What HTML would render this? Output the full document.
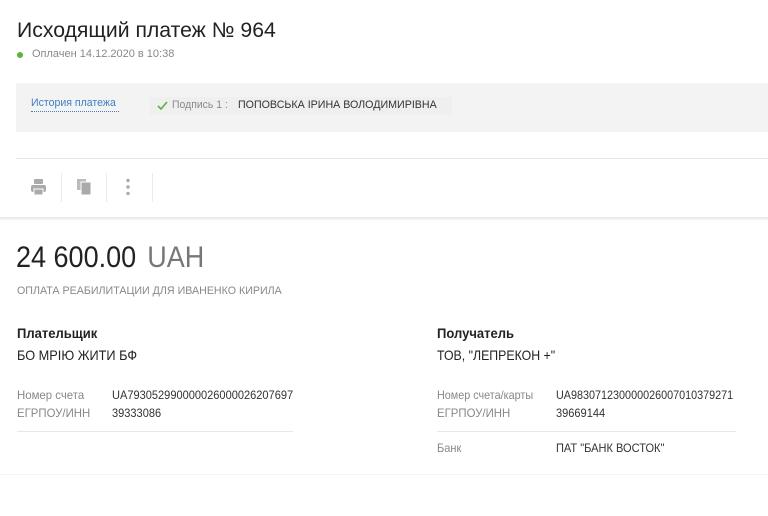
<!DOCTYPE html>
<html><head><meta charset="utf-8"><style>
*{margin:0;padding:0;box-sizing:border-box}
body{width:768px;height:516px;background:#fff;font-family:"Liberation Sans",sans-serif;color:#222;position:relative;overflow:hidden}
.a{position:absolute;white-space:nowrap}
.c{display:inline-block;transform-origin:0 0}
</style></head><body>
<div class="a" style="left:17px;top:19px;font-size:21px;color:#222"><span class="c" style="transform:scaleX(1.01)">Исходящий платеж № 964</span></div>
<div class="a" style="left:17px;top:52px;width:6px;height:6px;border-radius:50%;background:#5ab43c"></div>
<div class="a" style="left:32px;top:48px;font-size:11px;color:#888"><span class="c" style="transform:scaleX(1.0)">Оплачен 14.12.2020 в 10:38</span></div>

<div class="a" style="left:16px;top:83px;width:752px;height:49px;background:#f3f3f3"></div>
<div class="a" style="left:150px;top:97px;width:302px;height:18px;background:#efefef"></div>
<div class="a" style="left:31px;top:97px;font-size:11px;color:#3d80c4;border-bottom:1px dotted #3d80c4;padding-bottom:2px"><span class="c" style="transform:scaleX(0.96)">История платежа</span></div>
<svg class="a" style="left:157px;top:101px" width="11" height="9" viewBox="0 0 11 9"><path d="M1 5 L4 8 L10 1" fill="none" stroke="#5ab43c" stroke-width="1.6"/></svg>
<div class="a" style="left:172px;top:99px;font-size:11px;color:#888"><span class="c" style="transform:scaleX(0.95)">Подпись 1 :</span></div>
<div class="a" style="left:238px;top:99px;font-size:11px;color:#333"><span class="c" style="transform:scaleX(0.97)">ПОПОВСЬКА ІРИНА ВОЛОДИМИРІВНА</span></div>

<div class="a" style="left:16px;top:158px;width:752px;height:1px;background:#e6e6e6"></div>
<svg class="a" style="left:30px;top:178px" width="17" height="18" viewBox="0 0 17 18"><rect x="4" y="1" width="9" height="5" rx="1" fill="#aaa"/><rect x="1" y="7" width="15" height="7" rx="2" fill="#aaa"/><rect x="4" y="11" width="9" height="6" fill="#aaa" stroke="#fff" stroke-width="1"/></svg>
<svg class="a" style="left:76px;top:178px" width="17" height="18" viewBox="0 0 17 18"><rect x="1" y="1" width="9" height="11" fill="#bbb"/><rect x="5" y="4" width="10" height="13" fill="#aaa" stroke="#fff" stroke-width="1"/></svg>
<svg class="a" style="left:125px;top:178px" width="6" height="18" viewBox="0 0 6 18"><circle cx="3" cy="2.5" r="1.7" fill="#aaa"/><circle cx="3" cy="9" r="1.7" fill="#aaa"/><circle cx="3" cy="15.5" r="1.7" fill="#aaa"/></svg>
<div class="a" style="left:61px;top:173px;width:1px;height:29px;background:#ebebeb"></div>
<div class="a" style="left:106px;top:173px;width:1px;height:29px;background:#ebebeb"></div>
<div class="a" style="left:152px;top:173px;width:1px;height:29px;background:#ebebeb"></div>
<div class="a" style="left:0;top:217px;width:768px;height:3px;background:linear-gradient(#e4e4e4,#f7f7f7)"></div>

<div class="a" style="left:16px;top:241px;font-size:30px;color:#222"><span class="c" style="transform:scaleX(0.9)">24 600.00 <span style="color:#777;margin-left:4px">UAH</span></span></div>
<div class="a" style="left:17px;top:285px;font-size:11px;color:#888"><span class="c" style="transform:scaleX(0.97)">ОПЛАТА РЕАБИЛИТАЦИИ ДЛЯ ИВАНЕНКО КИРИЛА</span></div>

<div class="a" style="left:17px;top:325px;font-size:14px;color:#222;font-weight:bold"><span class="c" style="transform:scaleX(0.93)">Плательщик</span></div>
<div class="a" style="left:17px;top:347px;font-size:14px;color:#222"><span class="c" style="transform:scaleX(0.91)">БО МРІЮ ЖИТИ БФ</span></div>
<div class="a" style="left:17px;top:388px;font-size:12px;color:#888"><span class="c" style="transform:scaleX(0.95)">Номер счета</span></div>
<div class="a" style="left:112px;top:388px;font-size:12px;color:#333"><span class="c" style="transform:scaleX(0.92)">UA793052990000026000026207697</span></div>
<div class="a" style="left:17px;top:406px;font-size:12px;color:#888"><span class="c" style="transform:scaleX(0.95)">ЕГРПОУ/ИНН</span></div>
<div class="a" style="left:112px;top:406px;font-size:12px;color:#333"><span class="c" style="transform:scaleX(0.92)">39333086</span></div>
<div class="a" style="left:17px;top:431px;width:276px;height:1px;background:#e8e8e8"></div>

<div class="a" style="left:437px;top:325px;font-size:14px;color:#222;font-weight:bold"><span class="c" style="transform:scaleX(0.93)">Получатель</span></div>
<div class="a" style="left:437px;top:347px;font-size:14px;color:#222"><span class="c" style="transform:scaleX(0.88)">ТОВ, "ЛЕПРЕКОН +"</span></div>
<div class="a" style="left:437px;top:388px;font-size:12px;color:#888"><span class="c" style="transform:scaleX(0.9)">Номер счета/карты</span></div>
<div class="a" style="left:556px;top:388px;font-size:12px;color:#333"><span class="c" style="transform:scaleX(0.9)">UA983071230000026007010379271</span></div>
<div class="a" style="left:437px;top:406px;font-size:12px;color:#888"><span class="c" style="transform:scaleX(0.95)">ЕГРПОУ/ИНН</span></div>
<div class="a" style="left:556px;top:406px;font-size:12px;color:#333"><span class="c" style="transform:scaleX(0.92)">39669144</span></div>
<div class="a" style="left:437px;top:431px;width:299px;height:1px;background:#e8e8e8"></div>
<div class="a" style="left:437px;top:441px;font-size:12px;color:#888"><span class="c" style="transform:scaleX(0.92)">Банк</span></div>
<div class="a" style="left:556px;top:441px;font-size:12px;color:#333"><span class="c" style="transform:scaleX(0.92)">ПАТ "БАНК ВОСТОК"</span></div>
<div class="a" style="left:0;top:474px;width:768px;height:1px;background:#f3f3f3"></div>
</body></html>
